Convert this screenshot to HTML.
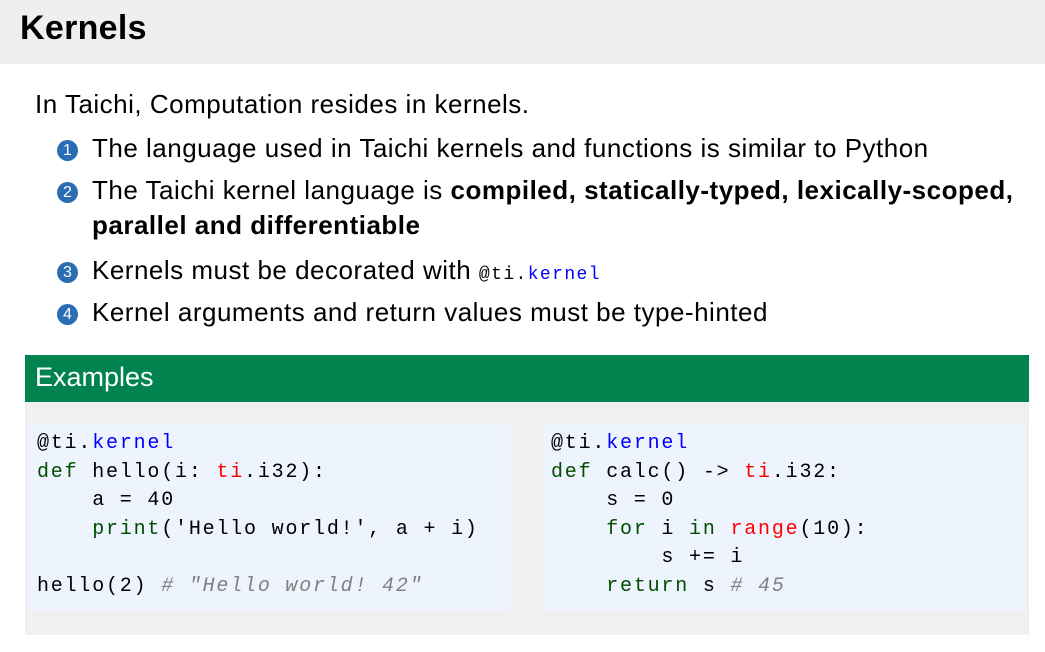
<!DOCTYPE html>
<html><head><meta charset="utf-8"><style>
*{margin:0;padding:0;box-sizing:border-box}
body{width:1045px;height:652px;background:#fff;position:relative;overflow:hidden;font-family:"Liberation Sans",sans-serif;color:#000}
.hdr{position:absolute;left:0;top:0;width:1045px;height:64px;background:#efefef}
.hdr h1{position:absolute;left:20px;top:9px;font-size:34px;font-weight:bold;line-height:38px;letter-spacing:0.3px}
.t{position:absolute;font-size:26px;letter-spacing:0.5px;line-height:30px;white-space:nowrap}
.n{position:absolute;left:57px;width:21px;height:21px;border-radius:50%;background:#2a6db3;color:#fff;font-size:16px;line-height:21px;text-align:center}
.ex{position:absolute;left:25px;top:355px;width:1004px;height:47px;background:#00834e;color:#fff;font-size:27px;line-height:45px;padding-left:10px}
.exb{position:absolute;left:25px;top:402px;width:1004px;height:233px;background:#f0f0f0}
.code{position:absolute;top:423px;height:187px;background:#eef4fd}
pre{position:absolute;font-family:"Liberation Mono",monospace;font-size:20px;letter-spacing:1.8px;line-height:28.6px;top:430px}
.k{color:#0000ff}.g{color:#004d00}.r{color:#f00}.c{color:#808080;font-style:italic}
</style></head><body>
<div class="hdr"><h1>Kernels</h1></div>
<div class="t" style="left:35px;top:89px">In Taichi, Computation resides in kernels.</div>
<div class="n" style="top:140px">1</div>
<div class="t" style="left:92px;top:133px">The language used in Taichi kernels and functions is similar to Python</div>
<div class="n" style="top:182px">2</div>
<div class="t" style="left:92px;top:175px">The Taichi kernel language is <b>compiled, statically-typed, lexically-scoped,</b></div>
<div class="t" style="left:92px;top:210px"><b>parallel and differentiable</b></div>
<div class="n" style="top:262px">3</div>
<div class="t" style="left:92px;top:255px">Kernels must be decorated with <span style="font-family:'Liberation Mono',monospace;font-size:18px;letter-spacing:1.4px">@ti.<span class="k">kernel</span></span></div>
<div class="n" style="top:304px">4</div>
<div class="t" style="left:92px;top:297px">Kernel arguments and return values must be type-hinted</div>
<div class="ex">Examples</div>
<div class="exb"></div>
<div class="code" style="left:28px;width:483px"></div>
<div class="code" style="left:543px;width:483px"></div>
<pre style="left:37px">@ti.<span class="k">kernel</span>
<span class="g">def</span> hello(i: <span class="r">ti</span>.i32):
    a = 40
    <span class="g">print</span>('Hello world!', a + i)

hello(2) <span class="c"># "Hello world! 42"</span></pre>
<pre style="left:551px">@ti.<span class="k">kernel</span>
<span class="g">def</span> calc() -&gt; <span class="r">ti</span>.i32:
    s = 0
    <span class="g">for</span> i <span class="g">in</span> <span class="r">range</span>(10):
        s += i
    <span class="g">return</span> s <span class="c"># 45</span></pre>
</body></html>
